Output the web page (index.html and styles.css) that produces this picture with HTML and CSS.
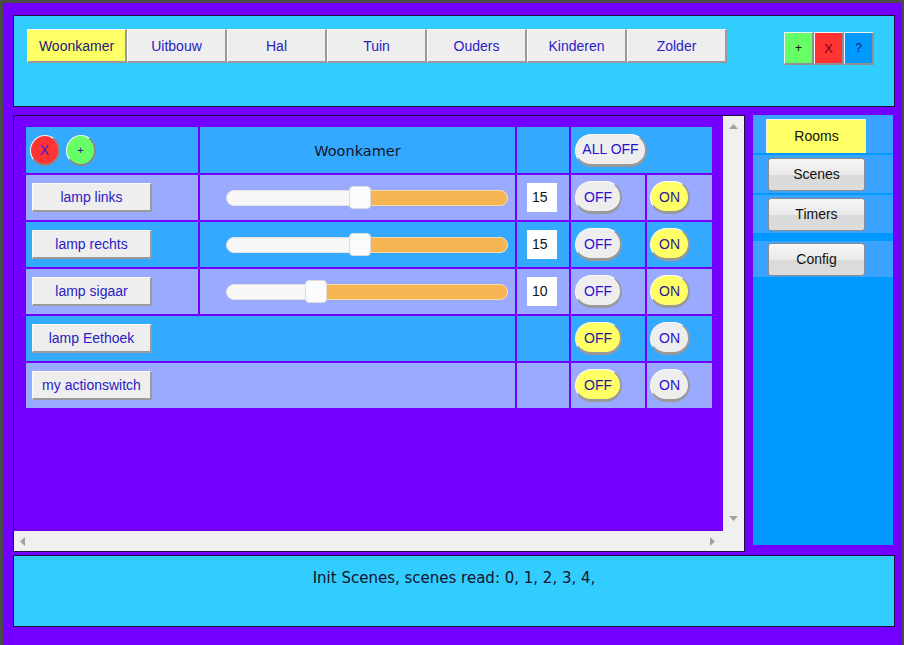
FILE: index.html
```html
<!DOCTYPE html>
<html>
<head>
<meta charset="utf-8">
<title>Domotica</title>
<link rel="stylesheet" href="styles.css">
</head>
<body>
<div class="app">
  <header class="topbar">
    <nav class="tabs">
      <button class="tab active">Woonkamer</button>
      <button class="tab">Uitbouw</button>
      <button class="tab">Hal</button>
      <button class="tab">Tuin</button>
      <button class="tab">Ouders</button>
      <button class="tab">Kinderen</button>
      <button class="tab">Zolder</button>
    </nav>
    <div class="tools">
      <button class="tool add">+</button>
      <button class="tool del">X</button>
      <button class="tool help">?</button>
    </div>
  </header>

  <div class="middle">
    <section class="scrollpane">
      <div class="viewport">
        <div class="grid">
          <div class="cell blue head-tools">
            <button class="circle red">X</button>
            <button class="circle green">+</button>
          </div>
          <div class="cell blue title">Woonkamer</div>
          <div class="cell blue"></div>
          <div class="cell blue span2 off-cell"><button class="pill alloff">ALL OFF</button></div>

          <div class="cell lav"><button class="name">lamp links</button></div>
          <div class="cell lav slider-cell"><div class="track"><div class="fill" style="left:122px"></div><div class="thumb" style="left:122px"></div></div></div>
          <div class="cell lav val-cell"><div class="val">15</div></div>
          <div class="cell lav off-cell"><button class="pill off">OFF</button></div>
          <div class="cell lav on-cell"><button class="pill on yellow">ON</button></div>

          <div class="cell blue"><button class="name">lamp rechts</button></div>
          <div class="cell blue slider-cell"><div class="track"><div class="fill" style="left:122px"></div><div class="thumb" style="left:122px"></div></div></div>
          <div class="cell blue val-cell"><div class="val">15</div></div>
          <div class="cell blue off-cell"><button class="pill off">OFF</button></div>
          <div class="cell blue on-cell"><button class="pill on yellow">ON</button></div>

          <div class="cell lav"><button class="name">lamp sigaar</button></div>
          <div class="cell lav slider-cell"><div class="track"><div class="fill" style="left:78px"></div><div class="thumb" style="left:78px"></div></div></div>
          <div class="cell lav val-cell"><div class="val">10</div></div>
          <div class="cell lav off-cell"><button class="pill off">OFF</button></div>
          <div class="cell lav on-cell"><button class="pill on yellow">ON</button></div>

          <div class="cell blue span2"><button class="name">lamp Eethoek</button></div>
          <div class="cell blue"></div>
          <div class="cell blue off-cell"><button class="pill off yellow">OFF</button></div>
          <div class="cell blue on-cell"><button class="pill on">ON</button></div>

          <div class="cell lav span2"><button class="name">my actionswitch</button></div>
          <div class="cell lav"></div>
          <div class="cell lav off-cell"><button class="pill off yellow">OFF</button></div>
          <div class="cell lav on-cell"><button class="pill on">ON</button></div>
        </div>
      </div>
      <div class="vscroll">
        <svg class="arrow" width="9" height="5" viewBox="0 0 9 5"><path d="M0 5 L4.5 0 L9 5 Z" fill="#a2a2a2"/></svg>
        <svg class="arrow" width="9" height="5" viewBox="0 0 9 5"><path d="M0 0 L4.5 5 L9 0 Z" fill="#a2a2a2"/></svg>
      </div>
      <div class="hscroll">
        <svg class="arrow" width="5" height="9" viewBox="0 0 5 9"><path d="M5 0 L0 4.5 L5 9 Z" fill="#a2a2a2"/></svg>
        <svg class="arrow" width="5" height="9" viewBox="0 0 5 9"><path d="M0 0 L5 4.5 L0 9 Z" fill="#a2a2a2"/></svg>
      </div>
      <div class="corner"></div>
    </section>

    <aside class="sidebar">
      <div class="side-row"><button class="side-btn active">Rooms</button></div>
      <div class="side-row"><button class="side-btn">Scenes</button></div>
      <div class="side-row"><button class="side-btn">Timers</button></div>
      <div class="side-row sep"><button class="side-btn">Config</button></div>
    </aside>
  </div>

  <footer class="status">Init Scenes, scenes read: 0, 1, 2, 3, 4,</footer>
</div>
</body>
</html>
```

FILE: styles.css
```css
* { box-sizing: border-box; }

body {
  margin: 0;
  width: 904px;
  height: 645px;
  overflow: hidden;
  background: #4b4b4b;
  font-family: "Liberation Sans", Arial, sans-serif;
}

button {
  font-family: "Liberation Sans", Arial, sans-serif;
  margin: 0;
  padding: 0;
  cursor: pointer;
}

.app {
  margin: 3px 2px 0 3px;
  height: 642px;
  background: #7300ff;
  padding: 12px 7px 0 10px;
  display: flex;
  flex-direction: column;
}

/* top bar */
.topbar {
  height: 92px;
  border: 1px solid #1c1040;
  background: #33ccff;
  display: flex;
  align-items: flex-start;
  padding: 13px 20px 0 13px;
}

.tabs { display: flex; }

.tab {
  width: 100px;
  height: 34px;
  background: #eeeeee;
  border-style: solid;
  border-width: 1px 2px 2px 1px;
  border-color: #fbfbfb #9a9a9a #9a9a9a #fbfbfb;
  color: #2a20c4;
  font-size: 14px;
}

.tab.active {
  background: #ffff66;
  color: #24207a;
}

.tools {
  margin-left: auto;
  margin-top: 3px;
  display: flex;
}

.tool {
  width: 30px;
  height: 33px;
  border-style: solid;
  border-width: 1px 2px 2px 1px;
  border-color: #f4f4f4 #8f8f8f #8f8f8f #f4f4f4;
  font-size: 12px;
}

.tool.add { background: #66ff66; color: #111; }
.tool.del { background: #ff3333; color: #7a0010; font-size: 13px; }
.tool.help { background: #0099ff; color: #1a1a70; }

/* middle */
.middle {
  display: flex;
  margin-top: 8px;
  align-items: flex-start;
}

.scrollpane {
  width: 732px;
  height: 437px;
  border: 1px solid #1c1040;
  display: grid;
  grid-template-columns: 1fr 21px;
  grid-template-rows: 1fr 20px;
}

.viewport {
  overflow: hidden;
  padding: 11px 0 0 12px;
}

.vscroll, .hscroll, .corner { background: #f0f0f0; }

.vscroll {
  display: flex;
  flex-direction: column;
  justify-content: space-between;
  align-items: center;
  padding: 8px 0 10px 0;
}

.hscroll {
  display: flex;
  justify-content: space-between;
  align-items: center;
  padding: 0 8px 0 6px;
}

.arrow { display: block; }

.grid {
  display: grid;
  grid-template-columns: 172px 315px 52px 74px 65px;
  grid-template-rows: 46px repeat(5, 45px);
  gap: 2px;
  width: 686px;
}

.cell {
  display: flex;
  align-items: center;
}

.cell.blue { background: #33aaff; }
.cell.lav { background: #99aaff; }
.span2 { grid-column: span 2; }

.head-tools {
  padding-left: 4px;
  gap: 6px;
}

.circle {
  width: 30px;
  height: 31px;
  border-radius: 50%;
  border-style: solid;
  border-width: 1px 2px 2px 1px;
  border-color: #f8f8f8 #8a8a8a #8a8a8a #f8f8f8;
  color: #3a1ad0;
  font-size: 14px;
}

.circle.red { background: #ff3333; }
.circle.green { background: #66ff66; font-size: 11px; color: #2a1a9a; }

.title {
  justify-content: center;
  font-family: "Comic Sans MS", "DejaVu Sans", sans-serif;
  font-size: 14.5px;
  color: #12122a;
  padding-top: 2px;
}

.name {
  margin-left: 6px;
  width: 120px;
  height: 29px;
  background: #eeeeee;
  border-style: solid;
  border-width: 1px 2px 2px 1px;
  border-color: #fbfbfb #9a9a9a #9a9a9a #fbfbfb;
  color: #2a20c4;
  font-size: 14px;
}

.slider-cell { padding-left: 26px; }

.track {
  position: relative;
  width: 282px;
  height: 16px;
  border-radius: 8px;
  background: #f7f7f7;
  border: 1px solid #e4e4e4;
}

.fill {
  position: absolute;
  top: -1px;
  bottom: -1px;
  right: -1px;
  background: #f6b552;
  border: 1px solid #f2d9a8;
  border-radius: 0 8px 8px 0;
}

.thumb {
  position: absolute;
  top: -5px;
  width: 22px;
  height: 23px;
  background: #fbfbfb;
  border: 1px solid #dcdcdc;
  border-radius: 4px;
}

.val-cell { padding-left: 10px; }

.val {
  width: 30px;
  height: 29px;
  background: #ffffff;
  font-size: 14px;
  color: #111;
  padding: 6px 0 0 5px;
}

.off-cell { padding-left: 4px; }
.on-cell { padding-left: 3px; }

.pill {
  height: 33px;
  border-radius: 17px;
  background: #eeeeee;
  border-style: solid;
  border-width: 1px 2px 3px 1px;
  border-color: #fafafa #999 #999 #fafafa;
  color: #2a10d0;
  font-size: 14px;
}

.pill.off { width: 47px; }
.pill.on { width: 40px; }
.pill.alloff { width: 72px; }
.pill.yellow { background: #ffff66; color: #1e1a9a; }

/* sidebar */
.sidebar {
  margin-left: 8px;
  width: 140px;
  height: 430px;
  background: #0099ff;
}

.side-row {
  height: 38px;
  margin-bottom: 2px;
  background: #3aa2ff;
  display: flex;
  align-items: center;
  padding-left: 15px;
}

.side-row:first-child { padding-left: 13px; }

.side-row.sep {
  margin-top: 8px;
  height: 36px;
}

.side-btn {
  width: 97px;
  height: 33px;
  border: 1px solid #8c8c8c;
  border-radius: 3px;
  background: linear-gradient(#f6f6f6, #e9e9e9 50%, #d9d9d9 51%, #dddddd);
  color: #111;
  font-size: 14px;
}

.side-btn.active {
  width: 100px;
  height: 34px;
  border-radius: 0;
  border: none;
  border-top: 1px solid #f4f4ee;
  border-left: 1px solid #f4f4ee;
  background: #ffff66;
  margin-top: 3px;
}

/* status */
.status {
  margin-top: 3px;
  width: 882px;
  height: 72px;
  border: 1px solid #1c1040;
  background: #33ccff;
  text-align: center;
  padding-top: 13px;
  font-family: "Comic Sans MS", "DejaVu Sans", sans-serif;
  font-size: 15px;
  color: #12122a;
}
```
